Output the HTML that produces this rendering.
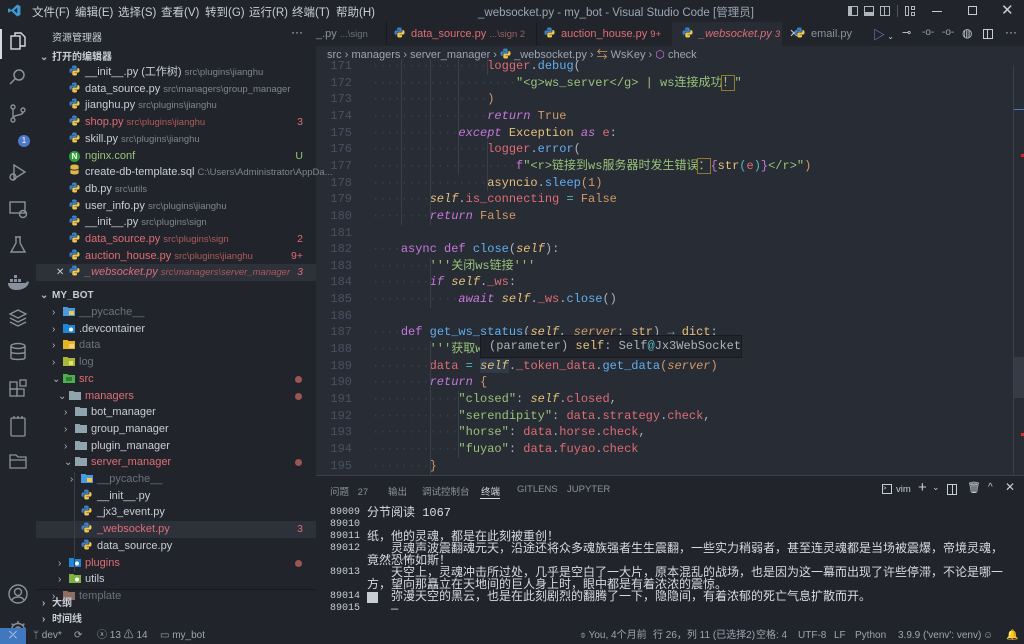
<!DOCTYPE html>
<html><head><meta charset="utf-8">
<style>
*{margin:0;padding:0;box-sizing:border-box}
body{width:1024px;height:644px;overflow:hidden;background:#282c34;font-family:"Liberation Sans","Noto Sans CJK SC",sans-serif;color:#9da5b4;position:relative}
.abs{position:absolute}
#title{left:0;top:0;width:1024px;height:22px;background:#21252b}
.menu{top:4px;font-size:11.5px;color:#c8ccd4}
#act{left:0;top:22px;width:36px;height:606px;background:#21252b}
#side{left:36px;top:22px;width:280px;height:606px;background:#21252b}
.row{position:absolute;left:0;width:280px;height:17px;font-size:11px;line-height:17px;color:#c8ccd4;white-space:nowrap}
.row .d{font-size:9.5px;color:#7f848e;margin-left:3px}
.red{color:#e06c75!important}
.grn{color:#98c379!important}
.dim{color:#6b717d!important}
.badge{position:absolute;right:13px;top:0;font-size:10.5px}
.dot{position:absolute;right:14px;top:5px;width:7px;height:7px;border-radius:50%;background:#9b5553}
.chev{position:absolute;top:0;font-size:10px;color:#abb2bf}
#tabs{left:316px;top:22px;width:708px;height:24px;background:#21252b}
.tab{position:absolute;top:0;height:24px;font-size:11px;line-height:24px;white-space:nowrap;color:#8b919c}
#crumb{left:316px;top:46px;width:708px;height:19px;font-size:11px;color:#9da5b4;line-height:19px}
#code{left:316px;top:59px;width:697px;height:416px;overflow:hidden;font-family:"Liberation Mono","Noto Sans CJK SC",monospace;font-size:12px}
.ln{position:absolute;left:0;width:36px;text-align:right;color:#495162;height:16.65px;line-height:16.65px}
.cl{position:absolute;left:56px;white-space:pre;height:16.65px;line-height:16.65px;color:#abb2bf}
.w{color:#3b4048}
.k{color:#c678dd}.ki{color:#c678dd;font-style:italic}.f{color:#61afef}.s{color:#98c379}.r{color:#e06c75}.o{color:#d19a66}.y{color:#e5c07b}.c{color:#56b6c2}.si{color:#e5c07b;font-style:italic}.oi{color:#d19a66;font-style:italic}
#panel{left:316px;top:475px;width:708px;height:153px;background:#21252b;border-top:1px solid #3a3f4b}
.pt{position:absolute;top:8px;font-size:9.5px;color:#8b919c}
.tn{position:absolute;left:14px;font-family:"Liberation Mono",monospace;font-size:10px;color:#c8ccd4;line-height:12px}
.tt{position:absolute;font-family:"Liberation Mono","Noto Sans CJK SC",monospace;font-size:12px;color:#d7dae0;white-space:pre;line-height:12px}
#status{left:0;top:628px;width:1024px;height:16px;background:#21252b;font-size:10px;color:#9da5b4;line-height:16px}
.st{position:absolute;top:0;white-space:nowrap}
</style></head><body>

<div id="title" class="abs">
 <svg class="abs" style="left:8px;top:4px" width="13" height="13" viewBox="0 0 24 24"><path d="M17 1 L23 4 V20 L17 23 L6 13 L2 16 L0 15 V9 L2 8 L6 11 Z M17 7 L11 12 L17 17 Z" fill="#3c99d4"/></svg>
 <span class="abs menu" style="left:32px">文件(F)</span>
 <span class="abs menu" style="left:75px">编辑(E)</span>
 <span class="abs menu" style="left:118px">选择(S)</span>
 <span class="abs menu" style="left:161px">查看(V)</span>
 <span class="abs menu" style="left:205px">转到(G)</span>
 <span class="abs menu" style="left:249px">运行(R)</span>
 <span class="abs menu" style="left:292px">终端(T)</span>
 <span class="abs menu" style="left:336px">帮助(H)</span>
 <span class="abs menu" style="left:478px;color:#9da5b4">_websocket.py - my_bot - Visual Studio Code [管理员]</span>
 <div class="abs" style="left:848px;top:6px;width:10px;height:10px;border:1px solid #b0b6c0;border-left-width:4px"></div>
 <div class="abs" style="left:864px;top:6px;width:10px;height:10px;border:1px solid #b0b6c0;border-bottom-width:4px"></div>
 <div class="abs" style="left:880px;top:6px;width:10px;height:10px;border:1px solid #b0b6c0"></div>
 <div class="abs" style="left:884px;top:6px;width:1px;height:10px;background:#b0b6c0"></div>
 <div class="abs" style="left:897px;top:5px;width:1px;height:12px;background:#555"></div>
 <div class="abs" style="left:905px;top:6px;width:4px;height:10px;border:1px solid #b0b6c0"></div>
 <div class="abs" style="left:911px;top:6px;width:4px;height:4px;border:1px solid #b0b6c0"></div>
 <div class="abs" style="left:911px;top:12px;width:4px;height:4px;border:1px solid #b0b6c0"></div>
 <div class="abs" style="left:932px;top:11px;width:10px;height:1px;background:#c8ccd4"></div>
 <div class="abs" style="left:968px;top:6px;width:9px;height:9px;border:1px solid #c8ccd4"></div>
 <span class="abs" style="left:1001px;top:1px;font-size:15px;color:#c8ccd4">✕</span>
</div>

<div id="act" class="abs">
 <div class="abs" style="left:0;top:7px;width:2px;height:30px;background:#d7dae0"></div>
 <svg class="abs" style="left:8px;top:9px" width="20" height="20" viewBox="0 0 20 20" fill="none" stroke="#d7dae0" stroke-width="1.4"><path d="M7 5 V2 H13 L17 6 V15 H12"/><rect x="3" y="5" width="9" height="13"/></svg>
 <svg class="abs" style="left:8px;top:45px" width="20" height="20" viewBox="0 0 20 20" fill="none" stroke="#8b919c" stroke-width="1.5"><circle cx="11" cy="8" r="5"/><path d="M7.5 11.5 L2 17"/></svg>
 <svg class="abs" style="left:8px;top:81px" width="20" height="22" viewBox="0 0 20 22" fill="none" stroke="#8b919c" stroke-width="1.4"><circle cx="5" cy="4" r="2"/><circle cx="5" cy="17" r="2"/><circle cx="15" cy="7" r="2"/><path d="M5 6V15M15 9C15 13 6 11 5 15"/></svg>
 <div class="abs" style="left:18px;top:113px;width:12px;height:12px;border-radius:50%;background:#4d78cc;color:#fff;font-size:8px;text-align:center;line-height:12px">1</div>
 <svg class="abs" style="left:8px;top:140px" width="20" height="20" viewBox="0 0 20 20" fill="none" stroke="#8b919c" stroke-width="1.4"><path d="M6 3 L17 10 L6 17 Z"/><circle cx="5" cy="15" r="3"/></svg>
 <svg class="abs" style="left:8px;top:177px" width="20" height="20" viewBox="0 0 20 20" fill="none" stroke="#8b919c" stroke-width="1.4"><rect x="2" y="3" width="15" height="11"/><circle cx="15" cy="15" r="3.5"/></svg>
 <svg class="abs" style="left:8px;top:213px" width="20" height="20" viewBox="0 0 20 20" fill="none" stroke="#8b919c" stroke-width="1.4"><path d="M7 2H13M8 2V8L3 17H17L12 8V2"/></svg>
 <svg class="abs" style="left:7px;top:251px" width="22" height="18" viewBox="0 0 22 18" fill="#8b919c"><rect x="3" y="6" width="3" height="3"/><rect x="7" y="6" width="3" height="3"/><rect x="11" y="6" width="3" height="3"/><rect x="7" y="2" width="3" height="3"/><path d="M1 10H19C20 8 21 8 22 9C21 14 16 17 9 17C4 17 1 14 1 10Z"/></svg>
 <svg class="abs" style="left:8px;top:286px" width="20" height="20" viewBox="0 0 20 20" fill="none" stroke="#8b919c" stroke-width="1.3"><path d="M10 2L18 6L10 10L2 6Z M2 10L10 14L18 10 M2 14L10 18L18 14"/></svg>
 <svg class="abs" style="left:9px;top:320px" width="18" height="20" viewBox="0 0 18 20" fill="none" stroke="#8b919c" stroke-width="1.4"><ellipse cx="9" cy="4" rx="7" ry="2.5"/><path d="M2 4V16C2 18 16 18 16 16V4M2 10C2 12 16 12 16 10"/></svg>
 <svg class="abs" style="left:8px;top:357px" width="20" height="20" viewBox="0 0 20 20" fill="none" stroke="#8b919c" stroke-width="1.3"><rect x="2" y="10" width="7" height="7"/><rect x="9" y="10" width="7" height="7"/><rect x="2" y="3" width="7" height="7"/><rect x="12" y="1" width="6" height="6"/></svg>
 <svg class="abs" style="left:9px;top:393px" width="18" height="22" viewBox="0 0 18 22" fill="none" stroke="#8b919c" stroke-width="1.3"><rect x="2" y="3" width="14" height="18" rx="1"/><path d="M5 1V4M9 1V4M13 1V4"/></svg>
 <svg class="abs" style="left:8px;top:430px" width="20" height="18" viewBox="0 0 20 18" fill="none" stroke="#8b919c" stroke-width="1.3"><path d="M2 3H8L10 5H18V16H2Z M2 8H18"/></svg>
 <svg class="abs" style="left:7px;top:561px" width="22" height="22" viewBox="0 0 22 22" fill="none" stroke="#8b919c" stroke-width="1.4"><circle cx="11" cy="11" r="9"/><circle cx="11" cy="9" r="3.5"/><path d="M5 17C7 13 15 13 17 17"/></svg>
 <svg class="abs" style="left:7px;top:597px" width="22" height="22" viewBox="0 0 22 22" fill="none" stroke="#8b919c" stroke-width="1.4"><circle cx="11" cy="11" r="3"/><path d="M11 2V5M11 17V20M2 11H5M17 11H20M4.6 4.6L6.8 6.8M15.2 15.2L17.4 17.4M4.6 17.4L6.8 15.2M15.2 6.8L17.4 4.6"/><circle cx="11" cy="11" r="6.5"/></svg>
</div>

<div id="side" class="abs">
 <span class="abs" style="left:16px;top:7px;font-size:10px;color:#c8ccd4">资源管理器</span>
 <span class="abs" style="left:255px;top:3px;font-size:12px;color:#c8ccd4">···</span>
 <div class="row" style="top:27px;font-weight:bold;font-size:10px"><span class="chev" style="left:4px">⌄</span><span style="margin-left:16px">打开的编辑器</span></div>
 <div id="oe"></div>
 <div class="row" style="top:265px;font-weight:bold;font-size:10px"><span class="chev" style="left:4px">⌄</span><span style="margin-left:16px">MY_BOT</span></div>
 <div id="tree"></div>
 <div class="abs" style="left:0;top:567px;width:280px;height:1px;background:#181a1f"></div>
 <div class="row" style="top:573px;font-weight:bold;font-size:10px"><span class="chev" style="left:6px">›</span><span style="margin-left:16px">大纲</span></div>
 <div class="row" style="top:589px;font-weight:bold;font-size:10px"><span class="chev" style="left:6px">›</span><span style="margin-left:16px">时间线</span></div>
</div>

<div id="tabs" class="abs">
 <div class="tab" style="left:0;width:64px"><span style="color:#8b919c">_.py</span> <span style="font-size:9.5px;color:#6b717d">...\sign</span></div>
 <div class="abs" style="left:70px;top:0;width:1px;height:24px;background:#181a1f"></div>
 <div class="tab red" style="left:78px"><span class="py" style="margin-right:6px"></span>data_source.py <span style="font-size:9.5px;color:#9b6060">...\sign 2</span></div>
 <div class="abs" style="left:220px;top:0;width:1px;height:24px;background:#181a1f"></div>
 <div class="tab red" style="left:228px"><span class="py" style="margin-right:6px"></span>auction_house.py <span style="font-size:9.5px">9+</span></div>
 <div class="abs" style="left:356px;top:0;width:110px;height:24px;background:#282c34"></div>
 <div class="tab red" style="left:366px;font-style:italic"><span class="py" style="margin-right:6px"></span>_websocket.py <span style="font-size:9.5px">3</span> <span style="font-style:normal;color:#c8ccd4;margin-left:6px">✕</span></div>
 <div class="tab" style="left:478px"><span class="py" style="margin-right:6px"></span>email.py</div>
 <span class="abs" style="left:557px;top:4px;font-size:12px;color:#8a8fe0">▷<span style="font-size:8px;color:#c8ccd4"> ⌄</span></span>
 <span class="abs" style="left:586px;top:4px;font-size:11px;color:#c8ccd4">⊸</span>
 <span class="abs" style="left:606px;top:5px;font-size:10px;color:#9da5b4">-o-</span>
 <span class="abs" style="left:626px;top:5px;font-size:10px;color:#9da5b4">-o-</span>
 <span class="abs" style="left:646px;top:4px;font-size:12px;color:#c8ccd4">◍</span>
 <div class="abs" style="left:667px;top:7px;width:10px;height:10px;border:1px solid #c8ccd4"></div>
 <div class="abs" style="left:671px;top:7px;width:1px;height:10px;background:#c8ccd4"></div>
 <span class="abs" style="left:689px;top:3px;font-size:12px;color:#c8ccd4">···</span>
</div>

<div id="crumb" class="abs">
 <span style="margin-left:11px">src</span> › managers › server_manager › <span class="py"></span> _websocket.py › <span style="color:#d19a66">⇆</span> WsKey › <span style="color:#c678dd">⬡</span> check
</div>

<div id="code" class="abs"></div>

<div class="abs" style="left:480px;top:335px;width:262px;height:23px;background:#21252b;border:1px solid #181a1f;font-family:'Liberation Mono',monospace;font-size:12px;line-height:21px;padding-left:8px;color:#abb2bf;white-space:pre">(parameter) <span class="y">self</span>: Self<span class="c">@</span>Jx3WebSocket</div>

<div class="abs" style="left:1013px;top:65px;width:1px;height:410px;background:#3a3f4b"></div>
<div class="abs" style="left:1014px;top:109px;width:10px;height:1px;background:#4d78cc"></div>
<div class="abs" style="left:1021px;top:154px;width:3px;height:3px;background:#e02020"></div>
<div class="abs" style="left:1014px;top:357px;width:10px;height:41px;background:#363b45"></div>
<div class="abs" style="left:1021px;top:433px;width:3px;height:3px;background:#e03020"></div>

<div id="panel" class="abs">
 <span class="pt" style="left:14px">问题 <span style="margin-left:6px">27</span></span>
 <span class="pt" style="left:72px">输出</span>
 <span class="pt" style="left:106px">调试控制台</span>
 <span class="pt" style="left:165px;color:#d7dae0">终端</span>
 <div class="abs" style="left:164px;top:22px;width:20px;height:1px;background:#d7dae0"></div>
 <span class="pt" style="left:201px">GITLENS</span>
 <span class="pt" style="left:251px">JUPYTER</span>
 <div class="abs" style="left:566px;top:8px;width:10px;height:10px;border:1px solid #c8ccd4;font-size:6px;line-height:8px;color:#c8ccd4">&gt;</div>
 <span class="pt" style="left:580px;color:#c8ccd4">vim</span>
 <span class="abs" style="left:602px;top:3px;font-size:15px;color:#c8ccd4">+</span>
 <span class="abs" style="left:616px;top:6px;font-size:9px;color:#c8ccd4">⌄</span>
 <div class="abs" style="left:631px;top:8px;width:10px;height:11px;border:1px solid #c8ccd4"></div>
 <div class="abs" style="left:636px;top:8px;width:1px;height:11px;background:#c8ccd4"></div>
 <span class="abs" style="left:651px;top:5px;font-size:11px;color:#c8ccd4">🗑</span>
 <span class="abs" style="left:672px;top:6px;font-size:10px;color:#c8ccd4">^</span>
 <span class="abs" style="left:689px;top:4px;font-size:12px;color:#c8ccd4">✕</span>

 <div class="tn" style="top:31px">89009</div>
 <div class="tn" style="top:43px">89010</div>
 <div class="tn" style="top:55px">89011</div>
 <div class="tn" style="top:67px">89012</div>
 <div class="tn" style="top:91px">89013</div>
 <div class="tn" style="top:115px">89014</div>
 <div class="tn" style="top:127px">89015</div>

 <div class="tt" style="left:51px;top:31px">分节阅读 1067</div>
 <div class="tt" style="left:51px;top:55px">纸，他的灵魂，都是在此刻被重创！</div>
 <div class="tt" style="left:75px;top:67px">灵魂声波震翻魂元天，沿途还将众多魂族强者生生震翻，一些实力稍弱者，甚至连灵魂都是当场被震爆，帝境灵魂，</div>
 <div class="tt" style="left:51px;top:79px">竟然恐怖如斯！</div>
 <div class="tt" style="left:75px;top:91px">天空上，灵魂冲击所过处，几乎是空白了一大片，原本混乱的战场，也是因为这一幕而出现了许些停滞，不论是哪一</div>
 <div class="tt" style="left:51px;top:103px">方，望向那矗立在天地间的巨人身上时，眼中都是有着浓浓的震惊。</div>
 <div class="abs" style="left:51px;top:116px;width:11px;height:11px;background:#c8ccd4"></div>
 <div class="tt" style="left:75px;top:115px">弥漫天空的黑云，也是在此刻剧烈的翻腾了一下，隐隐间，有着浓郁的死亡气息扩散而开。</div>
 <div class="tt" style="left:75px;top:127px">—</div>
</div>

<div id="status" class="abs">
 <div class="abs" style="left:0;top:0;width:26px;height:16px;background:#4078c0;color:#fff;text-align:center;font-size:10px">⤫</div>
 <span class="st" style="left:33px">ᛘ dev*</span>
 <span class="st" style="left:74px">⟳</span>
 <span class="st" style="left:97px">ⓧ 13 ⚠ 14</span>
 <span class="st" style="left:160px">▭ my_bot</span>
 <span class="st" style="left:580px">⌽ You, 4个月前</span>
 <span class="st" style="left:653px">行 26，列 11 (已选择2)</span>
 <span class="st" style="left:756px">空格: 4</span>
 <span class="st" style="left:798px">UTF-8</span>
 <span class="st" style="left:834px">LF</span>
 <span class="st" style="left:855px">Python</span>
 <span class="st" style="left:898px">3.9.9 ('venv': venv)</span>
 <span class="st" style="left:983px">☺</span>
 <span class="st" style="left:1006px">🔔</span>
</div>

<script>
const pyIcon='<svg width="11" height="11" viewBox="0 0 12 12" style="vertical-align:-1px"><path d="M6 0.5C3 0.5 3.3 1.8 3.3 1.8V3.2H6.1V3.7H2.1C2.1 3.7 0.5 3.5 0.5 6.1C0.5 8.7 1.9 8.6 1.9 8.6H2.9V7.3C2.9 7.3 2.8 5.9 4.3 5.9H7C7 5.9 8.4 5.9 8.4 4.6V2C8.4 2 8.6 0.5 6 0.5Z" fill="#3d7fc4"/><path d="M6 11.5C9 11.5 8.7 10.2 8.7 10.2V8.8H5.9V8.3H9.9C9.9 8.3 11.5 8.5 11.5 5.9C11.5 3.3 10.1 3.4 10.1 3.4H9.1V4.7C9.1 4.7 9.2 6.1 7.7 6.1H5C5 6.1 3.6 6.1 3.6 7.4V10C3.6 10 3.4 11.5 6 11.5Z" fill="#f2c94c"/></svg>';
document.querySelectorAll('.py').forEach(e=>e.innerHTML=pyIcon);
function folder(c,inner){return '<svg width="12" height="10" viewBox="0 0 12 10" style="vertical-align:-1px"><path d="M0 1H4.5L5.5 2H12V10H0Z" fill="'+c+'"/>'+(inner||'')+'</svg>';}
const oe=[
 ['__init__.py (工作树)','src\\plugins\\jianghu','','',pyIcon],
 ['data_source.py','src\\managers\\group_manager','','',pyIcon],
 ['jianghu.py','src\\plugins\\jianghu','','',pyIcon],
 ['shop.py','src\\plugins\\jianghu','red','3',pyIcon],
 ['skill.py','src\\plugins\\jianghu','','',pyIcon],
 ['nginx.conf','','grn','U','<span style="display:inline-block;width:11px;height:11px;border-radius:50%;background:#2e9e3c;color:#fff;font-size:8px;text-align:center;line-height:11px;font-weight:bold">N</span>'],
 ['create-db-template.sql','C:\\Users\\Administrator\\AppDa...','','','<svg width="11" height="11" viewBox="0 0 10 12"><ellipse cx="5" cy="2.5" rx="4.5" ry="2" fill="#e0b84a"/><rect x="0.5" y="2.5" width="9" height="7" fill="#e0b84a"/><ellipse cx="5" cy="9.5" rx="4.5" ry="2" fill="#e0b84a"/><path d="M0.5 5.5C2 7 8 7 9.5 5.5" stroke="#21252b" fill="none"/></svg>'],
 ['db.py','src\\utils','','',pyIcon],
 ['user_info.py','src\\plugins\\jianghu','','',pyIcon],
 ['__init__.py','src\\plugins\\sign','','',pyIcon],
 ['data_source.py','src\\plugins\\sign','red','2',pyIcon],
 ['auction_house.py','src\\plugins\\jianghu','red','9+',pyIcon],
 ['_websocket.py','src\\managers\\server_manager','red','3',pyIcon],
];
let h='';
oe.forEach((r,i)=>{
 const top=42+i*16.7;
 const sel=i==12;
 h+='<div class="row '+r[2]+'" style="top:'+top+'px;'+(sel?'background:#2c313a;font-style:italic':'')+'">'+(sel?'<span class="chev" style="left:20px;font-style:normal;color:#c8ccd4">✕</span>':'')+'<span style="position:absolute;left:33px">'+r[4]+'</span><span style="position:absolute;left:49px">'+r[0]+'<span class="d" '+(r[2]=='red'?'style="color:#b05a5a"':'')+'>'+r[1]+'</span></span>'+(r[3]?'<span class="badge">'+r[3]+'</span>':'')+'</div>';
});
document.getElementById('oe').innerHTML=h;
const tree=[
 [18,'›',folder('#4a9ae0','<rect x="6" y="5" width="5" height="4" fill="#f2c94c"/>'),'__pycache__','dim',0],
 [18,'›',folder('#1f88d6','<circle cx="8" cy="6.5" r="2" fill="#fff"/>'),'.devcontainer','',0],
 [18,'›',folder('#e6b422','<rect x="6" y="5" width="5" height="4" fill="#f5d27a"/>'),'data','dim',0],
 [18,'›',folder('#a8b838','<rect x="6" y="5" width="4" height="4" fill="#e8e070"/>'),'log','dim',0],
 [18,'⌄',folder('#4caf50','<rect x="3" y="4" width="6" height="4" fill="#2e7d32"/>'),'src','red',1],
 [24,'⌄',folder('#90a4ae'),'managers','red',1],
 [30,'›',folder('#90a4ae'),'bot_manager','',0],
 [30,'›',folder('#90a4ae'),'group_manager','',0],
 [30,'›',folder('#90a4ae'),'plugin_manager','',0],
 [30,'⌄',folder('#90a4ae'),'server_manager','red',1],
 [36,'›',folder('#4a9ae0','<rect x="6" y="5" width="5" height="4" fill="#f2c94c"/>'),'__pycache__','dim',0],
 [36,'',pyIcon,'__init__.py','',0],
 [36,'',pyIcon,'_jx3_event.py','',0],
 [36,'',pyIcon,'_websocket.py','red',3],
 [36,'',pyIcon,'data_source.py','',0],
 [24,'›',folder('#1f88d6','<circle cx="8" cy="6.5" r="2" fill="#fff"/>'),'plugins','red',1],
 [24,'›',folder('#7cb342','<circle cx="8" cy="6.5" r="2" fill="#fff"/>'),'utils','',0],
 [18,'›',folder('#8d6e63'),'template','dim',0],
];
h='';
tree.forEach((r,i)=>{
 const top=282+i*16.7;
 const sel=i==13;
 h+='<div class="row '+r[4]+'" style="top:'+top+'px;'+(sel?'background:#2c313a':'')+'">'+(r[1]?'<span class="chev" style="left:'+(r[0]-2)+'px">'+r[1]+'</span>':'')+'<span style="position:absolute;left:'+(r[0]+9)+'px">'+r[2]+'</span><span style="position:absolute;left:'+(r[0]+25)+'px">'+r[3]+'</span>'+(r[5]==1?'<span class="dot"></span>':'')+(r[5]==3?'<span class="badge">3</span>':'')+'</div>';
});
h+='<div style="position:absolute;left:38px;top:450px;width:1px;height:100px;background:#3a3f4b"></div>';
document.getElementById('tree').innerHTML=h;

function ws(n){let s='';for(let i=0;i<n;i++)s+='·';return '<span class="w">'+s+'</span>';}
const L=[
 [171,16,'<span class="r">logger</span>.<span class="f">debug</span>('],
 [172,20,'<span class="s">"&lt;g&gt;ws_server&lt;/g&gt; | ws连接成功<span style="outline:1px solid #8a7a2a">！</span>"</span>'],
 [173,16,'<span class="o">)</span>'],
 [174,16,'<span class="ki">return</span> <span class="o">True</span>'],
 [175,12,'<span class="ki">except</span> <span class="y">Exception</span> <span class="ki">as</span> <span class="r">e</span>:'],
 [176,16,'<span class="r">logger</span>.<span class="f">error</span>('],
 [177,20,'<span class="k">f</span><span class="s">"&lt;r&gt;链接到ws服务器时发生错误<span style="outline:1px solid #8a7a2a">：</span></span><span class="k">{</span><span class="y">str</span><span class="c">(</span><span class="r">e</span><span class="c">)</span><span class="k">}</span><span class="s">&lt;/r&gt;"</span><span class="o">)</span>'],
 [178,16,'<span class="y">asyncio</span>.<span class="f">sleep</span><span class="o">(1)</span>'],
 [179,8,'<span class="si">self</span>.<span class="r">is_connecting</span> <span class="c">=</span> <span class="o">False</span>'],
 [180,8,'<span class="ki">return</span> <span class="o">False</span>'],
 [181,0,''],
 [182,4,'<span class="k">async</span> <span class="k">def</span> <span class="f">close</span>(<span class="si">self</span>):'],
 [183,8,'<span class="s">\'\'\'关闭ws链接\'\'\'</span>'],
 [184,8,'<span class="ki">if</span> <span class="si">self</span>.<span class="r">_ws</span>:'],
 [185,12,'<span class="ki">await</span> <span class="si">self</span>.<span class="r">_ws</span>.<span class="f">close</span>()'],
 [186,0,''],
 [187,4,'<span class="k">def</span> <span class="f">get_ws_status</span>(<span class="si">self</span>, <span class="oi">server</span>: <span class="y">str</span>) <span class="c">→</span> <span class="y">dict</span>:'],
 [188,8,'<span class="s">\'\'\'获取ws状态\'\'\'</span>'],
 [189,8,'<span class="r">data</span> <span class="c">=</span> <span class="si" style="background:#2f3a4a">self</span>.<span class="r">_token_data</span>.<span class="f">get_data</span><span class="o">(</span><span class="oi">server</span><span class="o">)</span>'],
 [190,8,'<span class="ki">return</span> <span class="o">{</span>'],
 [191,12,'<span class="s">"closed"</span>: <span class="si">self</span>.<span class="r">closed</span>,'],
 [192,12,'<span class="s">"serendipity"</span>: <span class="r">data</span>.<span class="r">strategy</span>.<span class="r">check</span>,'],
 [193,12,'<span class="s">"horse"</span>: <span class="r">data</span>.<span class="r">horse</span>.<span class="r">check</span>,'],
 [194,12,'<span class="s">"fuyao"</span>: <span class="r">data</span>.<span class="r">fuyao</span>.<span class="r">check</span>'],
 [195,8,'<span class="o">}</span>'],
];
h='';
L.forEach((l,i)=>{
 const top=-1+i*16.65;
 h+='<div class="ln" style="top:'+top+'px">'+l[0]+'</div><div class="cl" style="top:'+top+'px">'+(l[2]?ws(l[1]):'')+l[2]+'</div>';
});
[[4,0,10],[8,0,10],[12,0,7],[16,0,1],[16,5,3],[8,12,3],[8,17,9],[12,20,4]].forEach(g=>{
 h+='<div style="position:absolute;left:'+(56+g[0]*7.2)+'px;top:'+(-1+g[1]*16.65)+'px;width:1px;height:'+(g[2]*16.65)+'px;background:#3b4048"></div>';
});
document.getElementById('code').innerHTML=h;
</script>
</body></html>
